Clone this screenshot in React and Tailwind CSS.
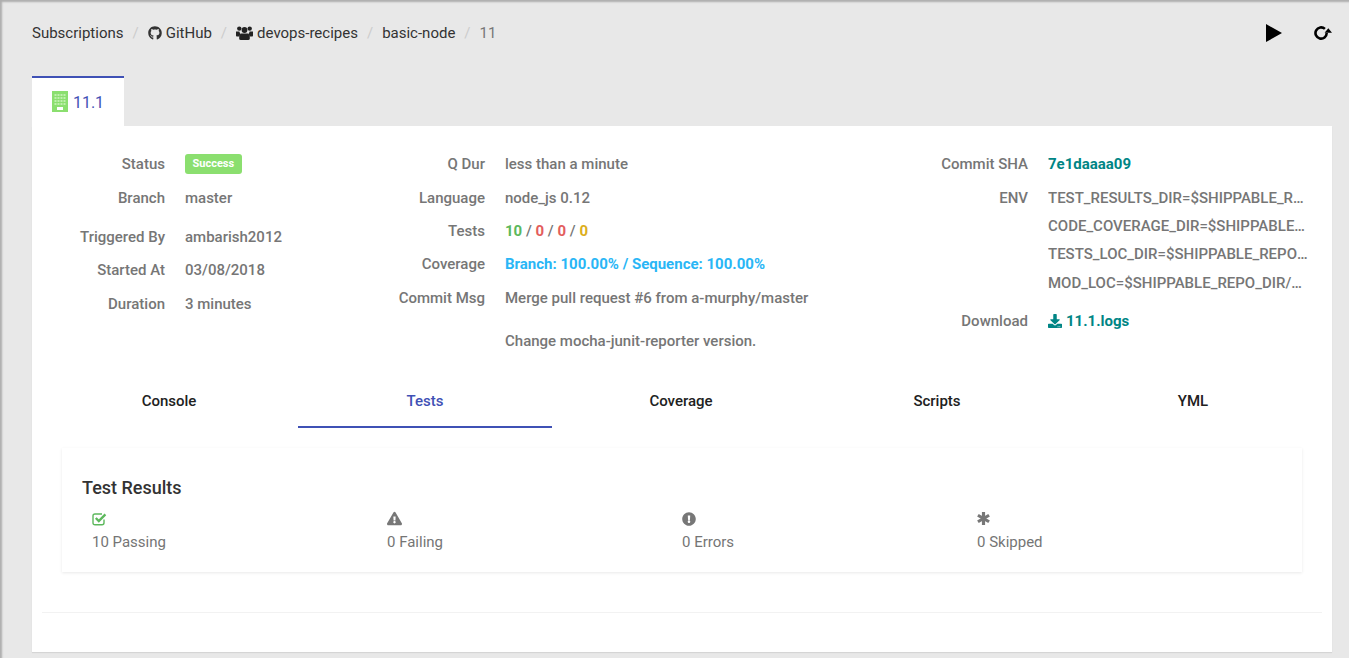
import React from 'react';
import { FaDownload, FaExclamationCircle, FaExclamationTriangle, FaGithub } from 'react-icons/fa';

const PlayIcon = () => (
  <svg viewBox="0 0 16 18" className="w-4 h-[18px]">
    <path d="M0 0l16 9-16 9z" fill="#000" />
  </svg>
);

const RefreshIcon = () => (
  <svg viewBox="0 0 18 14" className="w-[18px] h-[14px]" fill="none">
    <path d="M12.7 7a5.6 5.6 0 1 1-1.8-4.1" stroke="#000" strokeWidth="2.6" />
    <path d="M18 6.8h-7.4l3.7-4.6z" fill="#000" />
  </svg>
);

const UsersIcon = () => (
  <svg viewBox="0 0 17 14" className="w-[17px] h-[14px]" fill="#222">
    <circle cx="3.3" cy="2.6" r="2.2" />
    <circle cx="13.7" cy="2.6" r="2.2" />
    <circle cx="8.5" cy="4" r="2.9" />
    <path d="M0 5.5h3.4l1 3-1.4 1.9H0.8Q0 10.4 0 9.5z" />
    <path d="M17 5.5h-3.4l-1 3 1.4 1.9h2.2q.8 0 .8-.9z" />
    <path d="M4.6 7.4h7.8l1.4 2.4v2.6q0 1.6-1.6 1.6H4.8q-1.6 0-1.6-1.6V9.8z" />
  </svg>
);

const BuildingIcon = () => (
  <svg viewBox="0 0 16 21" className="w-4 h-[21px] shrink-0 -mt-[3px]">
    <rect width="16" height="21" fill="#8bdf6f" />
    {[3, 6, 9, 12].map(y =>
      [2.5, 5.5, 8.5, 11.5].map(x => <rect key={`${x}-${y}`} x={x} y={y} width="2" height="2" fill="#bff0ad" />)
    )}
    <rect x="5" y="16" width="6" height="3" fill="#fff" />
  </svg>
);

const CheckSquareIcon = () => (
  <svg viewBox="0 0 15 14" className="w-[15px] h-[14px]" fill="none">
    <path d="M12 7.5v3.2q0 2-2 2H3q-2 0-2-2V4q0-2 2-2h7" stroke="#5cb85c" strokeWidth="1.4" />
    <path d="M3.8 6l3 3L13.4 2.4" stroke="#5cb85c" strokeWidth="2.4" />
  </svg>
);

const AsteriskIcon = () => (
  <svg viewBox="0 0 14 14" className="w-[13px] h-[13px]" stroke="#777" strokeWidth="3.4">
    <path d="M7 0v14M1 3.5l12 7M13 3.5l-12 7" />
  </svg>
);

const Sep = () => <span className="text-[#ccc] px-[9px]">/</span>;

const InfoRow = ({ label, className, children }) => (
  <div className={`flex items-center ${className}`}>
    <div className="w-[123px] shrink-0 text-right">{label}</div>
    <div className="ml-5 min-w-0 flex-1 truncate">{children}</div>
  </div>
);

const Stat = ({ icon, label }) => (
  <div className="w-[295px] shrink-0">
    <div className="h-[17px] flex items-center text-[#777]">{icon}</div>
    <div className="mt-[5px] text-[#757575] text-[15px] leading-5">{label}</div>
  </div>
);

const tabs = ['Console', 'Tests', 'Coverage', 'Scripts', 'YML'];

export default function App() {
  return (
    <div className="relative h-[658px] overflow-hidden bg-[#e8e8e8] pl-8 pr-[17px] font-['Roboto',sans-serif] shadow-[inset_2px_2px_2px_rgba(0,0,0,0.25)]">
      {/* Breadcrumb */}
      <div className="flex items-center justify-between h-[76px] pb-[10px]">
        <div className="flex items-center text-[15px] text-[#333]">
          <span>Subscriptions</span>
          <Sep />
          <span className="flex items-center gap-1"><FaGithub className="w-[14px] h-[14px]" />GitHub</span>
          <Sep />
          <span className="flex items-center gap-1"><UsersIcon />devops-recipes</span>
          <Sep />
          <span>basic-node</span>
          <Sep />
          <span className="text-[#777]">11</span>
        </div>
        <div className="flex items-center gap-8 -mt-[1px]">
          <PlayIcon />
          <RefreshIcon />
        </div>
      </div>

      {/* Build tab */}
      <div className="w-[92px] h-[50px] bg-white border-t-2 border-[#3f51b5] flex items-center justify-center gap-[5px] text-[#3f51b5] text-base pt-[1px]">
        <BuildingIcon />
        <span>11.1</span>
      </div>

      <div className="bg-white h-[526px] px-[10px] shadow-[0_1px_1px_rgba(0,0,0,0.08)]">
        {/* Build info */}
        <div className="flex h-[248px] pt-[21px] text-[15px] font-medium text-[#767676]">
          <div className="w-[320px] shrink-0">
            <InfoRow label="Status" className="h-[34px]">
              <span className="block w-fit bg-[#8bdf6f] text-white text-[11px] font-bold leading-[19px] h-5 px-[7.5px] rounded-[3px]">Success</span>
            </InfoRow>
            <InfoRow label="Branch" className="h-[34px]">master</InfoRow>
            <InfoRow label="Triggered By" className="h-[34px] mt-[5px]">ambarish2012</InfoRow>
            <InfoRow label="Started At" className="h-[33px]">03/08/2018</InfoRow>
            <InfoRow label="Duration" className="h-[34px]">3 minutes</InfoRow>
          </div>
          <div className="w-[543px] shrink-0">
            <InfoRow label="Q Dur" className="h-[34px]">less than a minute</InfoRow>
            <InfoRow label="Language" className="h-[34px]">node_js 0.12</InfoRow>
            <InfoRow label="Tests" className="h-[33px]">
              <span className="text-[#5cb85c] font-bold">10</span> / <span className="text-[#e35d5d] font-bold">0</span> / <span className="text-[#e35d5d] font-bold">0</span> / <span className="text-[#dcae1d] font-bold">0</span>
            </InfoRow>
            <InfoRow label="Coverage" className="h-[33px]"><span className="text-[#29b6f6] font-bold">Branch: 100.00% / Sequence: 100.00%</span></InfoRow>
            <InfoRow label="Commit Msg" className="h-[34px]">Merge pull request #6 from a-murphy/master</InfoRow>
            <InfoRow label="" className="h-[52px]">Change mocha-junit-reporter version.</InfoRow>
          </div>
          <div className="w-[405px] shrink-0">
            <InfoRow label="Commit SHA" className="h-[34px]"><span className="text-[#008585] font-bold">7e1daaaa09</span></InfoRow>
            <InfoRow label="ENV" className="h-[34px]">TEST_RESULTS_DIR=$SHIPPABLE_REPO_DIR/shippable/testresults</InfoRow>
            <InfoRow label="" className="h-[22px]">CODE_COVERAGE_DIR=$SHIPPABLE_REPO_DIR/shippable/codecoverage</InfoRow>
            <InfoRow label="" className="h-[34px]">TESTS_LOC_DIR=$SHIPPABLE_REPO_DIR/tests</InfoRow>
            <InfoRow label="" className="h-[24px]">MOD_LOC=$SHIPPABLE_REPO_DIR/node_modules/.bin/</InfoRow>
            <InfoRow label="Download" className="h-[52px]">
              <span className="flex items-center gap-1 text-[#008585] font-bold"><FaDownload className="w-[14px] h-[14px]" />11.1.logs</span>
            </InfoRow>
          </div>
        </div>

        {/* Tabs */}
        <div className="flex h-[54px] -ml-[1px]">
          {tabs.map(t => (
            <div
              key={t}
              className={`w-[254px] pt-[2px] flex items-center justify-center text-[15px] font-medium border-b-2 mx-[1px] ${t === 'Tests' ? 'text-[#3f51b5] border-[#3f51b5]' : 'text-[#212121] border-transparent'}`}
            >
              {t}
            </div>
          ))}
        </div>

        {/* Test results */}
        <div className="mx-5 mt-5 h-[124px] px-5 pt-[28px] bg-white shadow-[0_1px_3px_rgba(0,0,0,0.09)]">
          <div className="text-lg leading-6 font-medium text-[#333]">Test Results</div>
          <div className="flex pl-[10px] mt-[10px]">
            <Stat icon={<CheckSquareIcon />} label="10 Passing" />
            <Stat icon={<FaExclamationTriangle className="w-[15px] h-[15px]" />} label="0 Failing" />
            <Stat icon={<FaExclamationCircle className="w-[14px] h-[14px]" />} label="0 Errors" />
            <Stat icon={<AsteriskIcon />} label="0 Skipped" />
          </div>
        </div>
        <div className="mt-10 border-t border-[#f2f2f2]" />
      </div>
    </div>
  );
}
